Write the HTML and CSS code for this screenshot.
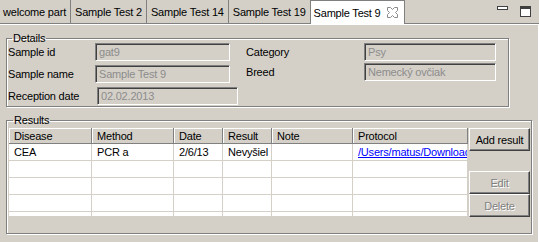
FILE: index.html
```html
<!DOCTYPE html>
<html lang="en">
<head>
    <meta charset="UTF-8">
    <title>Sample Test 9</title>
    <link rel="stylesheet" href="styles.css">
</head>
<body>
    <!-- Editor tabs -->
    <div class="tabbar">
        <div class="tab first">welcome part</div>
        <div class="tab">Sample Test 2</div>
        <div class="tab">Sample Test 14</div>
        <div class="tab">Sample Test 19</div>
        <div class="tab active">
            <span>Sample Test 9</span>
            <svg class="close" width="11" height="11" viewBox="0 0 11 11">
                <path d="M0.5 0.5h3l2 2l2-2h3v3l-2 2l2 2v3h-3l-2-2l-2 2h-3v-3l2-2l-2-2z" fill="#fff" stroke="#8a8a8a"/>
            </svg>
        </div>
        <div class="window-controls">
            <svg width="11" height="4" viewBox="0 0 11 4">
                <rect x="0.5" y="0.5" width="10" height="3" fill="#fff" stroke="#404040"/>
            </svg>
            <svg width="11" height="11" viewBox="0 0 11 11">
                <rect x="0.5" y="0.5" width="10" height="10" fill="#fff" stroke="#404040"/>
                <rect x="0" y="1" width="11" height="2" fill="#404040"/>
            </svg>
        </div>
    </div>

    <div class="editor">
        <!-- Details -->
        <fieldset class="group details">
            <legend>Details</legend>
            <div class="details-body">
                <div class="details-col left">
                    <div class="label">Sample id</div>
                    <div class="field">gat9</div>
                    <div class="label">Sample name</div>
                    <div class="field">Sample Test 9</div>
                    <div class="label">Reception date</div>
                    <div class="field wide">02.02.2013</div>
                </div>
                <div class="details-col right">
                    <div class="label">Category</div>
                    <div class="field">Psy</div>
                    <div class="label">Breed</div>
                    <div class="field">Nemecký ovčiak</div>
                </div>
            </div>
        </fieldset>

        <!-- Results -->
        <fieldset class="group results">
            <legend>Results</legend>
            <div class="results-body">
                <div class="table-wrap">
                    <table class="results-table">
                        <thead>
                            <tr>
                                <th class="c-disease">Disease</th>
                                <th class="c-method">Method</th>
                                <th class="c-date">Date</th>
                                <th class="c-result">Result</th>
                                <th class="c-note">Note</th>
                                <th class="c-protocol">Protocol</th>
                            </tr>
                        </thead>
                        <tbody>
                            <tr>
                                <td>CEA</td>
                                <td>PCR a</td>
                                <td>2/6/13</td>
                                <td>Nevyšiel</td>
                                <td></td>
                                <td><a href="#">/Users/matus/Downloads/protocol.pdf</a></td>
                            </tr>
                            <tr><td></td><td></td><td></td><td></td><td></td><td></td></tr>
                            <tr><td></td><td></td><td></td><td></td><td></td><td></td></tr>
                            <tr><td></td><td></td><td></td><td></td><td></td><td></td></tr>
                            <tr><td></td><td></td><td></td><td></td><td></td><td></td></tr>
                        </tbody>
                    </table>
                </div>
                <div class="actions">
                    <button class="btn">Add result</button>
                    <button class="btn edit" disabled>Edit</button>
                    <button class="btn" disabled>Delete</button>
                </div>
            </div>
        </fieldset>
    </div>
</body>
</html>
```

FILE: styles.css
```css
/* Page */
body {
    margin: 0;
    width: 539px;
    height: 242px;
    overflow: hidden;
    background: #d4d0c8;
    font-family: "Liberation Sans", Arial, sans-serif;
    font-size: 11px;
    letter-spacing: -0.2px;
    color: #000;
}

/* Tabs */
.tabbar {
    display: flex;
    height: 23px;
    border-bottom: 1px solid #808080;
}

.tab {
    padding: 1px 4px 0 4px;
    line-height: 22px;
    border-right: 1px solid #808080;
    white-space: nowrap;
}

.tab.first {
    padding-left: 3px;
}

.tab.active {
    display: flex;
    align-items: center;
    gap: 7px;
    padding: 0 6px 0 3px;
    margin-bottom: -1px;
    background: #fff;
    border-top: 1px solid #808080;
}

.tab .close {
    display: block;
}

.window-controls {
    display: flex;
    align-items: flex-start;
    gap: 12px;
    margin-left: auto;
    padding: 6px 8px 0 0;
}

.window-controls svg {
    display: block;
}

/* Editor area */
.editor {
    padding: 8px 6px 0 6px;
    border-top: 1px solid #fff;
    border-right: 1px solid #fff;
    height: 218px;
    box-sizing: border-box;
}

.group {
    margin: 0;
    padding: 0 1px 1px 1px;
    border: 1px solid #808080;
    box-shadow: inset 1px 1px 0 #fff, 1px 1px 0 #fff;
    box-sizing: border-box;
    min-width: 0;
}

.group legend {
    margin-left: 4px;
    padding: 0 1px;
    line-height: 11px;
}

/* Details */
.details {
    width: 503px;
}

.details-body {
    display: flex;
    gap: 8px;
    margin-top: -1px;
}

.details-col {
    display: grid;
    align-items: center;
}

.details-col.left {
    grid-template-columns: 87px 135px;
    row-gap: 4px;
    width: 230px;
}

.details-col.right {
    grid-template-columns: 118px 132px;
    row-gap: 2px;
    align-content: start;
}

.label {
    white-space: nowrap;
}

.field {
    height: 18px;
    line-height: 16px;
    padding-left: 3px;
    box-sizing: border-box;
    color: #8c8c8c;
    border: 1px solid;
    border-color: #808080 #fff #fff #808080;
    box-shadow: inset 1px 1px 0 #404040;
    white-space: nowrap;
    overflow: hidden;
}

.field.wide {
    width: 141px;
    margin-left: 2px;
}

/* Results */
.results {
    width: 526px;
    margin-top: 8px;
    padding: 2px 1px 16px 2px;
}

.results-body {
    display: flex;
    gap: 1px;
}

.table-wrap {
    width: 459px;
    height: 88px;
    overflow: hidden;
    background: #fff;
}

.results-table {
    width: 459px;
    table-layout: fixed;
    border-collapse: separate;
    border-spacing: 0;
}

.results-table th,
.results-table td {
    box-sizing: border-box;
    padding: 0 0 0 5px;
    text-align: left;
    font-weight: normal;
    white-space: nowrap;
    overflow: hidden;
    text-overflow: clip;
}

.results-table th {
    height: 16px;
    background: #d4d0c8;
    border-right: 1px solid #808080;
    border-bottom: 1px solid #808080;
    box-shadow: inset 1px 1px 0 #fff;
}

.results-table td {
    height: 17px;
    border-right: 1px solid #d4d0c8;
    border-bottom: 1px solid #d4d0c8;
}

.results-table .c-disease { width: 83px; }
.results-table .c-method { width: 82px; }
.results-table .c-date { width: 49px; }
.results-table .c-result { width: 49px; }
.results-table .c-note { width: 81px; }
.results-table .c-protocol { width: 115px; }

.results-table a {
    color: #0000ff;
    text-decoration: underline;
}

/* Buttons */
.actions {
    display: flex;
    flex-direction: column;
    width: 61px;
}

.btn {
    height: 23px;
    padding: 0;
    font: inherit;
    letter-spacing: inherit;
    color: #000;
    background: #d4d0c8;
    border: 1px solid;
    border-color: #fff #404040 #404040 #fff;
    box-shadow: inset -1px -1px 0 #808080;
}

.btn.edit {
    margin-top: 20px;
}

.btn:disabled {
    color: #808080;
    text-shadow: 1px 1px 0 #fff;
}
```
